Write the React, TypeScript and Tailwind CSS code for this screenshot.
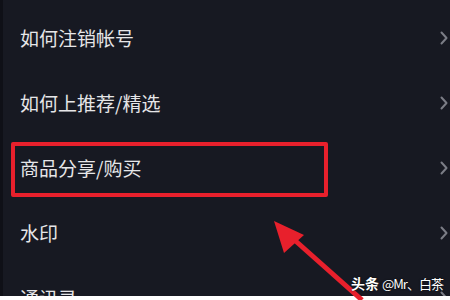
import React from "react";

const items = ["如何注销帐号", "如何上推荐/精选", "商品分享/购买", "水印", "通讯录"];

function Chevron() {
  return (
    <svg width="8" height="14" viewBox="0 0 8 14" className="shrink-0">
      <path d="M1.5 1.5 L6.5 7 L1.5 12.5" fill="none" stroke="#7b7d86" strokeWidth="2" strokeLinecap="round" strokeLinejoin="round" />
    </svg>
  );
}

export default function App() {
  return (
    <div
      className="relative w-[450px] h-[300px] flex flex-col overflow-hidden"
      style={{ fontFamily: '"Noto Sans CJK SC", "Noto Sans", sans-serif' }}
    >
      {/* list */}
      <div className="h-[296px] overflow-hidden bg-[#171922] border-l-[3px] border-[#0f1017] pt-[5px]">
        {items.map(t => (
          <div key={t} className="h-[65px] flex items-center justify-between pl-[17px] pr-[2px]">
            <span className="text-[19px] leading-none text-[#e6e6e8]">{t}</span>
            <Chevron />
          </div>
        ))}
      </div>
      <div className="h-[4px] bg-white" />

      {/* highlight box */}
      <div className="absolute left-[11px] top-[142px] w-[317px] h-[55px] border-[4px] border-[#e8202c] rounded-[2px]" />

      {/* arrow */}
      <svg className="absolute left-0 top-0" width="450" height="300" viewBox="0 0 450 300">
        <line x1="290" y1="236" x2="362" y2="300" stroke="#e8202c" strokeWidth="5" />
        <polygon points="274,221 304,235 284,253" fill="#e8202c" />
      </svg>

      {/* watermark */}
      <div
        className="absolute left-[351px] top-[276px] flex items-center gap-[3px] whitespace-nowrap text-white text-[14px] leading-none"
        style={{ textShadow: "0 0 2px rgba(0,0,0,0.8)" }}
      >
        <span className="font-bold">头条</span>
        <span className="text-[13px] tracking-[-1px]">@Mr、白茶</span>
      </div>
    </div>
  );
}
